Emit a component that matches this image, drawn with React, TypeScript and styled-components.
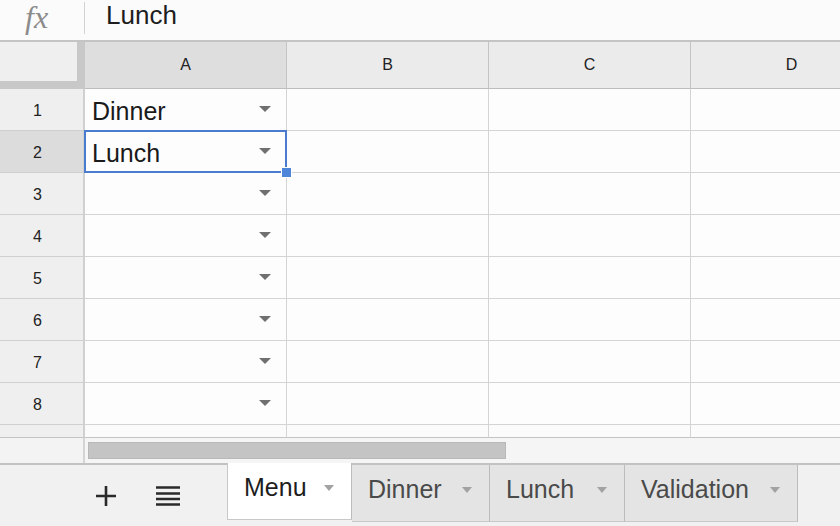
import React from "react";
import styled, { createGlobalStyle } from "styled-components";

const Global = createGlobalStyle`
  html, body { margin: 0; padding: 0; background: #fbfbfb; }
  body { font-family: "Liberation Sans", Arial, sans-serif; overflow: hidden; }
  * { box-sizing: border-box; }
`;

const Page = styled.div`
  width: 840px;
  height: 526px;
  overflow: hidden;
  display: flex;
  flex-direction: column;
  background: #fbfbfb;
`;

const FormulaBar = styled.div`
  height: 42px;
  flex: none;
  display: flex;
  align-items: stretch;
  border-bottom: 2px solid #c4c4c4;
  background: #fbfbfb;
`;

const FxBox = styled.div`
  width: 85px;
  flex: none;
  display: flex;
  align-items: center;
  padding-left: 25px;
  padding-bottom: 6px;
  font-family: "Liberation Serif", "Times New Roman", serif;
  font-style: italic;
  font-size: 32px;
  color: #8c8c8c;
  letter-spacing: 0px;
  position: relative;
  &::after {
    content: "";
    position: absolute;
    right: 0;
    top: 2px;
    height: 32px;
    width: 1px;
    background: #d2d2d2;
  }
`;

const FormulaText = styled.div`
  padding-left: 21px;
  padding-bottom: 10px;
  display: flex;
  align-items: center;
  font-size: 26px;
  color: #1e1e1e;
`;

const Sheet = styled.div`
  flex: none;
  display: flex;
  flex-direction: column;
  width: 1000px;
`;

const Row = styled.div<{ $h: number }>`
  display: flex;
  height: ${(p) => p.$h}px;
  flex: none;
`;

const Corner = styled.div`
  width: 85px;
  height: 47px;
  flex: none;
  background: #efefef;
  border-right: 8px solid #c8c8c8;
  border-bottom: 8px solid #c8c8c8;
`;

const ColHeader = styled.div<{ $active?: boolean }>`
  width: 202px;
  height: 47px;
  flex: none;
  display: flex;
  align-items: center;
  justify-content: center;
  padding-bottom: 1px;
  background: ${(p) => (p.$active ? "#dedede" : "#ebebeb")};
  border-right: 1px solid #c4c4c4;
  border-bottom: 1px solid #bdbdbd;
  font-size: 16px;
  color: #222;
`;

const RowHeader = styled.div<{ $active?: boolean }>`
  width: 85px;
  flex: none;
  display: flex;
  align-items: center;
  justify-content: center;
  background: ${(p) => (p.$active ? "#dcdcdc" : "#efefef")};
  border-right: 2px solid #d0d0d0;
  border-bottom: 1px solid #cfcfcf;
  font-size: 16px;
  color: #222;
  padding-right: 8px;
  padding-top: 2px;
`;

const Cell = styled.div<{ $selected?: boolean }>`
  width: 202px;
  flex: none;
  position: relative;
  display: flex;
  align-items: center;
  justify-content: space-between;
  padding: 0 15px 0 7px;
  background: #fdfdfd;
  border-right: 1px solid #d4d4d4;
  border-bottom: 1px solid #d4d4d4;
  font-size: 25px;
  color: #1a1a1a;
  &::after {
    content: "";
    display: ${(p) => (p.$selected ? "block" : "none")};
    position: absolute;
    left: -1px;
    top: -1px;
    right: -1px;
    bottom: -1px;
    border: 2px solid #4a7bcf;
    pointer-events: none;
  }
`;

const Handle = styled.div`
  position: absolute;
  right: -6px;
  bottom: -6px;
  width: 11px;
  height: 11px;
  background: #4d86d8;
  border: 1px solid #ffffff;
  z-index: 2;
`;

const CellText = styled.span`
  padding-top: 4px;
`;

const DropArrow = styled.span`
  width: 0;
  height: 0;
  border-left: 6px solid transparent;
  border-right: 6px solid transparent;
  border-top: 6px solid #707070;
  margin-bottom: 1px;
`;

const PartialHeader = styled(RowHeader)`
  border-bottom: 1px solid #c4c4c4;
`;

const PartialCell = styled.div`
  width: 202px;
  flex: none;
  background: #fbfbfb;
  border-right: 1px solid #d4d4d4;
  border-bottom: 1px solid #c4c4c4;
`;

const ScrollRow = styled.div`
  height: 25px;
  flex: none;
  display: flex;
`;

const ScrollCorner = styled.div`
  width: 85px;
  flex: none;
  background: #f3f3f3;
  border-right: 2px solid #d4d4d4;
`;

const ScrollTrack = styled.div`
  flex: 1;
  background: #f5f5f5;
  padding: 4px 0 3px 3px;
  display: flex;
`;

const Thumb = styled.div`
  width: 418px;
  height: 17px;
  background: #c4c4c4;
  border: 1px solid #b8b8b8;
`;

const TabBar = styled.div`
  flex: 1;
  display: flex;
  align-items: flex-start;
  background: #f1f1f1;
  border-top: 2px solid #c2c2c2;
`;

const Tools = styled.div`
  width: 227px;
  height: 56px;
  flex: none;
  display: flex;
  align-items: center;
  padding-left: 95px;
  gap: 39px;
  padding-top: 6px;
`;

const IconButton = styled.span`
  display: flex;
  align-items: center;
  justify-content: center;
  color: #2a2a2a;
`;

const Tab = styled.div<{ $active?: boolean; $w: number }>`
  width: ${(p) => p.$w}px;
  height: 57px;
  flex: none;
  display: flex;
  align-items: center;
  justify-content: space-between;
  padding: 0 17px 8px 16px;
  margin-top: ${(p) => (p.$active ? "-2px" : "0")};
  background: ${(p) => (p.$active ? "#ffffff" : "#e4e4e4")};
  border-left: ${(p) => (p.$active ? "1px solid #c8c8c8" : "none")};
  border-right: 1px solid #bcbcbc;
  border-bottom: 1px solid #c8c8c8;
  font-size: 25px;
  color: ${(p) => (p.$active ? "#1e1e1e" : "#4a4a4a")};
`;

const TabArrow = styled.span`
  width: 0;
  height: 0;
  border-left: 5px solid transparent;
  border-right: 5px solid transparent;
  border-top: 6px solid #a2a2a2;
  margin-top: 2px;
`;

const columns = ["A", "B", "C", "D"];
const values: Record<number, string> = { 1: "Dinner", 2: "Lunch" };

export default function App() {
  return (
    <>
      <Global />
      <Page>
        <FormulaBar>
          <FxBox>fx</FxBox>
          <FormulaText>Lunch</FormulaText>
        </FormulaBar>
        <Sheet>
          <Row $h={47}>
            <Corner />
            {columns.map((c, i) => (
              <ColHeader key={c} $active={i === 0}>
                {c}
              </ColHeader>
            ))}
          </Row>
          {[1, 2, 3, 4, 5, 6, 7, 8].map((r) => (
            <Row key={r} $h={42}>
              <RowHeader $active={r === 2}>{r}</RowHeader>
              <Cell $selected={r === 2}>
                <CellText>{values[r] ?? ""}</CellText>
                <DropArrow />
                {r === 2 && <Handle />}
              </Cell>
              <Cell />
              <Cell />
              <Cell />
            </Row>
          ))}
          <Row $h={13}>
            <PartialHeader />
            <PartialCell />
            <PartialCell />
            <PartialCell />
            <PartialCell />
          </Row>
          <ScrollRow>
            <ScrollCorner />
            <ScrollTrack>
              <Thumb />
            </ScrollTrack>
          </ScrollRow>
        </Sheet>
        <TabBar>
          <Tools>
            <IconButton>
              <svg width="22" height="22" viewBox="0 0 22 22">
                <path d="M11 1v20M1 11h20" stroke="#2a2a2a" strokeWidth="2.6" />
              </svg>
            </IconButton>
            <IconButton>
              <svg width="24" height="22" viewBox="0 0 24 22">
                <path
                  d="M0 2.5h24M0 8.5h24M0 14h24M0 19.5h24"
                  stroke="#2a2a2a"
                  strokeWidth="2.6"
                />
              </svg>
            </IconButton>
          </Tools>
          <Tab $active $w={125}>
            <span>Menu</span>
            <TabArrow />
          </Tab>
          <Tab $w={138}>
            <span>Dinner</span>
            <TabArrow />
          </Tab>
          <Tab $w={135}>
            <span>Lunch</span>
            <TabArrow />
          </Tab>
          <Tab $w={173}>
            <span>Validation</span>
            <TabArrow />
          </Tab>
        </TabBar>
      </Page>
    </>
  );
}
